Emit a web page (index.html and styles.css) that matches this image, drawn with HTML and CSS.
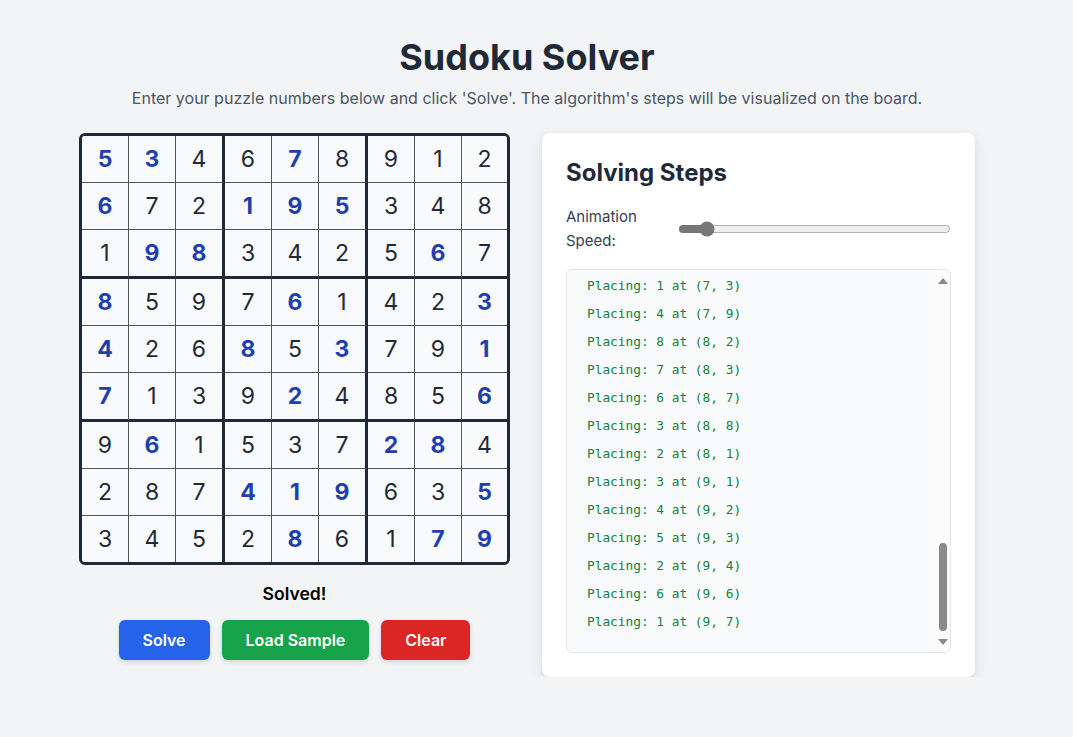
FILE: index.html
```html
<!DOCTYPE html>
<html lang="en">
<head>
<meta charset="utf-8">
<title>Sudoku Solver</title>
<link rel="stylesheet" href="styles.css">
</head>
<body>
<div class="app">
  <header class="header">
    <h1 class="title">Sudoku Solver</h1>
    <p class="subtitle">Enter your puzzle numbers below and click 'Solve'. The algorithm's steps will be visualized on the board.</p>
  </header>
  <main class="main">
    <section class="board-col">
      <div class="grid">
        <div class="cell given">5</div><div class="cell given">3</div><div class="cell c3">4</div><div class="cell">6</div><div class="cell given">7</div><div class="cell c3">8</div><div class="cell">9</div><div class="cell">1</div><div class="cell">2</div>
        <div class="cell given">6</div><div class="cell">7</div><div class="cell c3">2</div><div class="cell given">1</div><div class="cell given">9</div><div class="cell given c3">5</div><div class="cell">3</div><div class="cell">4</div><div class="cell">8</div>
        <div class="cell r3">1</div><div class="cell given r3">9</div><div class="cell given r3 c3">8</div><div class="cell r3">3</div><div class="cell r3">4</div><div class="cell r3 c3">2</div><div class="cell r3">5</div><div class="cell given r3">6</div><div class="cell r3">7</div>
        <div class="cell given">8</div><div class="cell">5</div><div class="cell c3">9</div><div class="cell">7</div><div class="cell given">6</div><div class="cell c3">1</div><div class="cell">4</div><div class="cell">2</div><div class="cell given">3</div>
        <div class="cell given">4</div><div class="cell">2</div><div class="cell c3">6</div><div class="cell given">8</div><div class="cell">5</div><div class="cell given c3">3</div><div class="cell">7</div><div class="cell">9</div><div class="cell given">1</div>
        <div class="cell given r3">7</div><div class="cell r3">1</div><div class="cell r3 c3">3</div><div class="cell r3">9</div><div class="cell given r3">2</div><div class="cell r3 c3">4</div><div class="cell r3">8</div><div class="cell r3">5</div><div class="cell given r3">6</div>
        <div class="cell">9</div><div class="cell given">6</div><div class="cell c3">1</div><div class="cell">5</div><div class="cell">3</div><div class="cell c3">7</div><div class="cell given">2</div><div class="cell given">8</div><div class="cell">4</div>
        <div class="cell">2</div><div class="cell">8</div><div class="cell c3">7</div><div class="cell given">4</div><div class="cell given">1</div><div class="cell given c3">9</div><div class="cell">6</div><div class="cell">3</div><div class="cell given">5</div>
        <div class="cell last">3</div><div class="cell last">4</div><div class="cell last c3">5</div><div class="cell last">2</div><div class="cell given last">8</div><div class="cell last c3">6</div><div class="cell last">1</div><div class="cell given last">7</div><div class="cell given last">9</div>
      </div>
      <p class="status">Solved!</p>
      <div class="buttons">
        <button class="btn btn-blue">Solve</button>
        <button class="btn btn-green">Load Sample</button>
        <button class="btn btn-red">Clear</button>
      </div>
    </section>
    <aside class="panel">
      <h2 class="panel-title">Solving Steps</h2>
      <div class="speed-row">
        <label class="speed-label" for="speed">Animation Speed:</label>
        <input class="speed" id="speed" type="range" min="0" max="100" value="8">
      </div>
      <div class="log">
        <div class="log-lines">
          <div class="log-line">Placing: 1 at (7, 3)</div>
          <div class="log-line">Placing: 4 at (7, 9)</div>
          <div class="log-line">Placing: 8 at (8, 2)</div>
          <div class="log-line">Placing: 7 at (8, 3)</div>
          <div class="log-line">Placing: 6 at (8, 7)</div>
          <div class="log-line">Placing: 3 at (8, 8)</div>
          <div class="log-line">Placing: 2 at (8, 1)</div>
          <div class="log-line">Placing: 3 at (9, 1)</div>
          <div class="log-line">Placing: 4 at (9, 2)</div>
          <div class="log-line">Placing: 5 at (9, 3)</div>
          <div class="log-line">Placing: 2 at (9, 4)</div>
          <div class="log-line">Placing: 6 at (9, 6)</div>
          <div class="log-line">Placing: 1 at (9, 7)</div>
        </div>
        <div class="scrollbar" aria-hidden="true">
          <span class="arrow arrow-up"></span>
          <div class="track"><span class="thumb"></span></div>
          <span class="arrow arrow-down"></span>
        </div>
      </div>
    </aside>
  </main>
</div>
</body>
</html>
```
FILE: styles.css
```css
* { box-sizing: border-box; }

html, body {
  margin: 0;
  padding: 0;
}

body {
  background: #f3f4f6;
  font-family: Inter, "Noto Sans", "Liberation Sans", sans-serif;
  color: #1f2937;
}

.app {
  width: 896px;
  margin-left: calc(50% - 457.5px);
  padding-top: 37px;
}

.header {
  text-align: center;
}

.title {
  margin: 0;
  font-size: 36px;
  line-height: 40px;
  font-weight: 700;
  color: #1f2937;
}

.subtitle {
  margin: 10px 0 0;
  font-size: 16px;
  line-height: 22px;
  color: #4b5563;
}

.main {
  display: flex;
  align-items: flex-start;
  gap: 32px;
  margin-top: 24px;
}

.board-col {
  display: flex;
  flex-direction: column;
  align-items: center;
  width: 431px;
  flex: none;
}

.grid {
  display: grid;
  grid-template-columns: repeat(9, auto);
  border: 3px solid #1f2937;
  border-radius: 6px;
  overflow: hidden;
  background: #f8fafc;
}

.cell {
  width: 47px;
  height: 47px;
  display: flex;
  align-items: center;
  justify-content: center;
  font-size: 23px;
  font-weight: 400;
  color: #1f2937;
  background: #f8fafc;
  border-right: 1px solid #4b5563;
  border-bottom: 1px solid #4b5563;
}

.cell:nth-child(9n) {
  width: 45px;
  border-right: none;
}

.cell.c3 {
  width: 49px;
  border-right: 3px solid #1f2937;
}

.cell.r3 {
  height: 49px;
  border-bottom: 3px solid #1f2937;
}

.cell.last {
  height: 46px;
  border-bottom: none;
}

.cell.given {
  font-weight: 700;
  color: #1e40af;
}

.status {
  margin: 17px 0 0;
  font-size: 17.6px;
  line-height: 24px;
  font-weight: 600;
  color: #000;
}

.buttons {
  display: flex;
  gap: 12px;
  margin-top: 14px;
}

.btn {
  height: 40px;
  padding: 0 24px;
  border: none;
  border-radius: 6px;
  font-family: inherit;
  font-size: 16px;
  font-weight: 600;
  color: #fff;
  box-shadow: 0 2px 5px rgba(0, 0, 0, 0.14);
  cursor: pointer;
}

.btn-blue { background: #2563eb; }
.btn-green { background: #16a34a; }
.btn-red { background: #dc2626; }

.panel {
  flex: 1;
  background: #fff;
  border-radius: 8px;
  padding: 24px;
  box-shadow: 0 4px 14px rgba(0, 0, 0, 0.1), 0 1px 3px rgba(0, 0, 0, 0.05);
}

.panel-title {
  margin: 0;
  font-size: 24px;
  line-height: 32px;
  font-weight: 700;
  color: #1f2937;
}

.speed-row {
  display: flex;
  align-items: center;
  gap: 12px;
  margin-top: 16px;
}

.speed-label {
  flex: 0 0 100px;
  font-size: 15px;
  line-height: 24px;
  color: #374151;
}

.speed {
  flex: 1;
  min-width: 0;
  margin: 0;
  accent-color: #777777;
}

.log {
  margin-top: 16px;
  height: 384px;
  border: 1px solid #e5e7eb;
  border-radius: 6px;
  background: #f9fafb;
  display: flex;
  overflow: hidden;
}

.log-lines {
  flex: 1;
  padding: 2px 0 0 20px;
}

.log-line {
  font-family: "DejaVu Sans Mono", "Liberation Mono", monospace;
  font-size: 12.8px;
  line-height: 28px;
  color: #15803d;
  white-space: pre;
}

.scrollbar {
  flex: 0 0 15px;
  display: flex;
  flex-direction: column;
  align-items: center;
  background: #fbfbfc;
  padding: 8px 0 7px;
}

.arrow {
  width: 0;
  height: 0;
  border-left: 5px solid transparent;
  border-right: 5px solid transparent;
}

.arrow-up {
  border-bottom: 6px solid #8a8a8a;
}

.arrow-down {
  border-top: 6px solid #8a8a8a;
}

.track {
  flex: 1;
  display: flex;
  flex-direction: column;
  justify-content: flex-end;
  padding: 0 0 8px;
}

.thumb {
  display: block;
  width: 8px;
  height: 88px;
  border-radius: 4px;
  background: #8a8a8a;
}
```
